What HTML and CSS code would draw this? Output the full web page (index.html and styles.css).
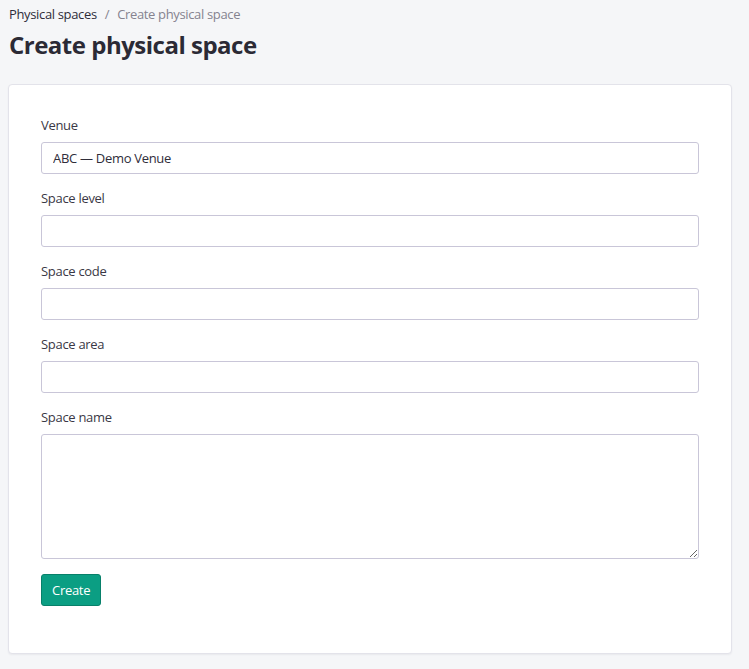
FILE: index.html
```html
<!DOCTYPE html>
<html lang="en">
<head>
<meta charset="utf-8">
<title>Create physical space</title>
<link rel="stylesheet" href="styles.css">
</head>
<body>
<nav class="breadcrumb">
  <a class="crumb" href="#">Physical spaces</a>
  <span class="sep">/</span>
  <span class="crumb current">Create physical space</span>
</nav>
<h1 class="title">Create physical space</h1>
<main class="card">
  <form class="form">
    <div class="group">
      <label class="label" for="venue">Venue</label>
      <input class="input" id="venue" type="text" value="ABC — Demo Venue">
    </div>
    <div class="group">
      <label class="label" for="level">Space level</label>
      <input class="input" id="level" type="text">
    </div>
    <div class="group">
      <label class="label" for="code">Space code</label>
      <input class="input" id="code" type="text">
    </div>
    <div class="group">
      <label class="label" for="area">Space area</label>
      <input class="input" id="area" type="text">
    </div>
    <div class="group">
      <label class="label" for="name">Space name</label>
      <textarea class="input textarea" id="name"></textarea>
    </div>
    <div class="actions">
      <button class="btn" type="button">Create</button>
    </div>
  </form>
</main>
</body>
</html>
```
FILE: styles.css
```css
* { box-sizing: border-box; }
html, body { margin: 0; padding: 0; }
body {
  background: #f5f6f8;
  font-family: "Open Sans", "Noto Sans", sans-serif;
  color: #2f2d3a;
  padding: 5px 17px 16px 8px;
}
.breadcrumb {
  display: flex;
  align-items: center;
  gap: 8px;
  font-size: 13px;
  line-height: 18px;
  letter-spacing: -0.35px;
  padding-left: 1px;
}
.crumb { color: #2f2d3a; text-decoration: none; }
.crumb.current { color: #85838f; }
.sep { color: #85838f; }
.title {
  margin: 7px 0 0 1px;
  font-size: 24px;
  line-height: 30px;
  font-weight: 700;
  color: #2b2a35;
  letter-spacing: -0.5px;
}
.card {
  margin-top: 24px;
  background: #fff;
  border: 1px solid #e3e3ea;
  border-radius: 4px;
  box-shadow: 0 1px 2px rgba(30, 30, 60, 0.06);
  padding: 31px 32px 32px;
}
.form { display: flex; flex-direction: column; }
.group { display: flex; flex-direction: column; gap: 8px; margin-bottom: 15px; }
.label {
  font-size: 13px;
  line-height: 18px;
  letter-spacing: -0.3px;
  color: #3a3845;
}
.input {
  height: 32px;
  width: 100%;
  border: 1px solid #c9c6d8;
  border-radius: 3px;
  padding: 0 11px;
  font-family: inherit;
  font-size: 13px;
  letter-spacing: -0.3px;
  color: #2f2d3a;
  background: #fff;
}
.textarea { height: 125px; resize: vertical; padding: 8px 11px; display: block; }
.actions { display: flex; margin-bottom: 15px; }
.btn {
  height: 32px;
  padding: 0 10px;
  background: #0b9e83;
  border: 1px solid #08806a;
  border-radius: 3px;
  color: #fff;
  font-family: inherit;
  font-size: 13px;
  font-weight: 500;
  letter-spacing: -0.3px;
}
```
